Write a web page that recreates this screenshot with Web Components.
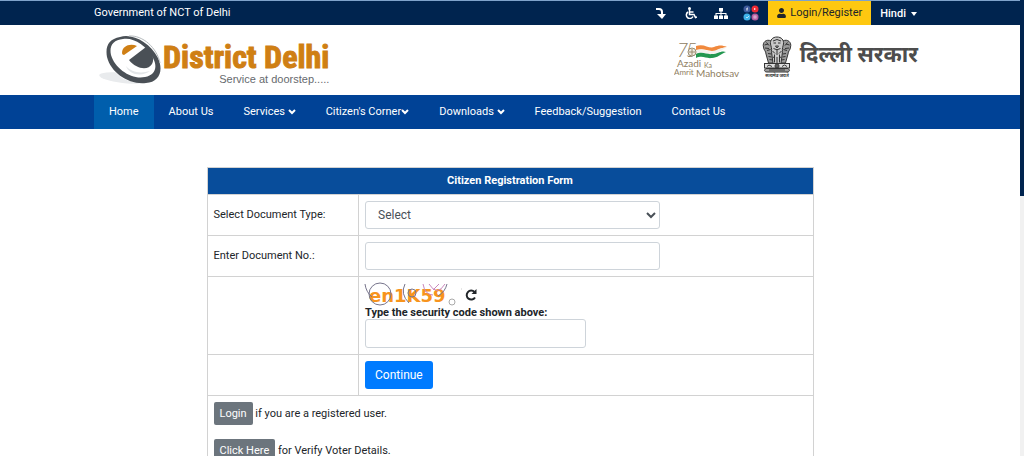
<!DOCTYPE html>
<html lang="en">
<head>
<meta charset="UTF-8">
<meta name="viewport" content="width=device-width, initial-scale=1">
<title>e-District Delhi - Citizen Registration Form</title>
<style>
  html, body {
    margin: 0;
    height: 100%;
  }
  body {
    display: flex;
    overflow: hidden;
    background: #fff;
    color: #212529;
    font-family: Roboto, "Noto Sans", sans-serif;
    font-size: 11px;
    line-height: 16px;
  }
  .page {
    flex: 1;
    min-width: 0;
  }
</style>
</head>
<body>
<div class="page">
  <top-bar></top-bar>
  <site-header></site-header>
  <main-nav>
    <nav-item active>Home</nav-item>
    <nav-item>About Us</nav-item>
    <nav-item menu>Services&nbsp;</nav-item>
    <nav-item menu>Citizen's Corner</nav-item>
    <nav-item menu>Downloads&nbsp;</nav-item>
    <nav-item>Feedback/Suggestion</nav-item>
    <nav-item>Contact Us</nav-item>
  </main-nav>
  <registration-form></registration-form>
</div>
<scroll-rail></scroll-rail>

<script>
// TOP BAR
class TopBar extends HTMLElement {
  constructor() {
    super();
    this.attachShadow({ mode: "open" });
    this.shadowRoot.innerHTML = `
      <style>
        :host {
          display: block;
          background: #00244f;
          border-top: 1px solid #7fa3cb;
          color: #fff;
          padding: 0 94px;
        }
        .bar {
          display: flex;
          align-items: center;
          justify-content: space-between;
          height: 24px;
        }
        .tools {
          display: flex;
          align-items: center;
          height: 100%;
        }
        a {
          color: inherit;
          text-decoration: none;
        }
        .icon {
          display: flex;
          justify-content: center;
          width: 30px;
        }
        .icon svg, .login svg {
          display: block;
        }
        .login {
          display: flex;
          align-items: center;
          gap: 4px;
          height: 100%;
          padding: 0 9px;
          margin-left: 2px;
          background: #fec810;
          color: #212529;
        }
        .lang {
          display: flex;
          align-items: center;
          gap: 5px;
          margin-left: 9px;
          padding: 2px 9px 0 0;
          border: 0;
          background: none;
          color: inherit;
          font: 500 11px/16px Roboto, sans-serif;
        }
        .caret {
          border: 3px solid transparent;
          border-top: 4px solid #fff;
          border-bottom: 0;
        }
      </style>
      <div class="bar">
        <span>Government of NCT of Delhi</span>
        <div class="tools">
          <a class="icon" href="#main" aria-label="Skip to main content">
            <svg width="10" height="12" viewBox="0 0 10 12" fill="none" stroke="#fff" stroke-width="2">
              <path d="M0 2h3q3 0 3 3v3"/><path d="M1 7h9L6 12z" fill="#fff" stroke="none"/>
            </svg>
          </a>
          <a class="icon" href="#access" aria-label="Accessibility">
            <svg width="12" height="12" viewBox="0 0 24 24" fill="none" stroke="#fff" stroke-width="3">
              <circle cx="9" cy="3" r="3" fill="#fff" stroke="none"/>
              <path d="M9 5v10h9l3 6 3-1M9 10h8M6 10a7 7 0 1 0 10 9"/>
            </svg>
          </a>
          <a class="icon" href="#sitemap" aria-label="Sitemap">
            <svg width="14" height="11" viewBox="0 0 28 22" fill="#fff">
              <path d="M10 0h8v7h-3v3h10v5h3v7h-8v-7h3v-3h-8v3h3v7h-8v-7h3v-3H5v3h3v7H0v-7h3v-5h10V7h-3z"/>
            </svg>
          </a>
          <a class="icon" href="#social" aria-label="Social media">
            <svg width="16" height="16" viewBox="0 0 16 16">
              <circle cx="4" cy="4" r="3.500" fill="#3d5a9b"/><circle cx="12" cy="4" r="3.500" fill="#ee2b34"/>
              <circle cx="4" cy="12" r="3.500" fill="#3fb2e8"/><circle cx="12" cy="12" r="3.500" fill="#b45a9c"/>
              <path d="M4 6V3h1M3 4h2M3 12l1 1 2-2" stroke="#fff" stroke-width="1" fill="none" opacity=".6"/>
              <path d="M11 3v2l2-1z" fill="#fff"/><rect x="11" y="11" width="2" height="2" fill="none" stroke="#fff" opacity=".6"/>
            </svg>
          </a>
          <a class="login" href="#login">
            <svg width="9" height="10" viewBox="0 0 448 512" fill="#212529">
              <path d="M224 256c71 0 128-57 128-128S295 0 224 0 96 57 96 128s57 128 128 128zm90 32h-17c-22 10-47 16-73 16s-51-6-73-16h-17C60 288 0 348 0 422v42c0 27 21 48 48 48h352c27 0 48-21 48-48v-42c0-74-60-134-134-134z"/>
            </svg>
            Login/Register
          </a>
          <button class="lang" type="button">Hindi <span class="caret"></span></button>
        </div>
      </div>
    `;
  }
}
customElements.define("top-bar", TopBar);

// HEADER WITH LOGOS
class SiteHeader extends HTMLElement {
  constructor() {
    super();
    this.attachShadow({ mode: "open" });
    this.shadowRoot.innerHTML = `
      <style>
        :host {
          display: flex;
          justify-content: space-between;
          align-items: center;
          height: 70px;
          padding: 0 102px 0 98px;
          background: #fff;
        }
        .brand, .partners {
          display: flex;
          align-items: center;
        }
        .brand {
          color: #cf7f14;
          text-decoration: none;
        }
        svg {
          display: block;
        }
        .name {
          display: block;
          font: bold 32px/32px Impact, "Liberation Sans Narrow", "Roboto Condensed", "Open Sans Condensed", "Liberation Sans", sans-serif;
          -webkit-text-stroke: 1px #cf7f14;
        }
        .tagline {
          display: block;
          color: #666a6e;
          font: 11px/12px "Liberation Sans", sans-serif;
          text-align: right;
        }
        .words {
          padding-top: 6px;
        }
        .partners {
          align-items: flex-start;
          padding-bottom: 4px;
        }
        .azadi {
          padding-top: 3px;
        }
        .emblem {
          margin: 0 8px 0 22px;
        }
        .gov {
          color: #4d4d4d;
          font: bold 22px/42px "Noto Sans Devanagari", "Noto Sans", sans-serif;
        }
      </style>
      <a class="brand" href="#home">
        <svg width="65" height="54" viewBox="0 0 65 54">
          <ellipse cx="25" cy="45" rx="24" ry="5" fill="#e9ebed" transform="rotate(7 25 45)"/>
          <ellipse cx="35" cy="27" rx="23" ry="21" fill="#fff" transform="rotate(35 35 27)"/>
          <path fill-rule="evenodd" fill="#4a5056" d="M22 4C35 0 52 10 60 25c6 13 1 24-12 25C31 52 13 40 9 24 7 13 11 6 22 4zM25 6c-10 1-14 7-12 16 4 14 21 25 34 22 10-2 13-10 8-19C48 12 35 4 25 6z"/>
          <path d="M31 3c14-1 28 12 31 27" fill="none" stroke="#b5babd" stroke-width="1"/>
          <path d="M24 20c0-7 8-10 15-7l-13 9c-1 0-2-1-2-2z" fill="#cf7f14"/>
          <path d="M48 14c6 5 9 12 6 17-4 7-16 5-23-4z" fill="#4a5056"/>
          <path d="M28 33c5 6 14 8 24 5-8 6-21 4-24-5z" fill="#e3e6e8"/>
        </svg>
        <span class="words">
          <span class="name">District Delhi</span>
          <span class="tagline">Service at doorstep.....</span>
        </span>
      </a>
      <div class="partners">
        <svg class="azadi" width="66" height="42" viewBox="0 0 66 42" font-family="Lato, sans-serif" fill="#8f8062">
          <g font-size="19" font-weight="300"><text x="3" y="18" font-style="italic">7</text><text x="12" y="18" font-style="italic">5</text></g>
          <path d="M22 7c8-3 13 3 18 1 5-2 8-2 13 0-6 0-9 5-15 4-6-1-9-3-16-1z" fill="#f1893d"/>
          <path d="M22 11c7-2 11 2 16 1 5 0 8-4 14-3-5 2-8 6-14 6-6 0-9-3-16 0z" fill="#f2f2ee"/>
          <path d="M22 15c7-3 11 1 16 0 6 0 9-4 14-2-5 2-9 6-14 6-6 1-9-3-16 0z" fill="#239750"/>
          <circle cx="18" cy="13" r="4" fill="#eee9df" stroke="#9a8c70"/>
          <path d="M18 10v6M15 13h6" stroke="#9a8c70"/>
          <text x="3" y="28" font-size="10">Azadi</text>
          <text x="30" y="29" font-size="7">Ka</text>
          <text x="0" y="36" font-size="8">Amrit</text>
          <text x="22" y="38" font-size="10">Mahotsav</text>
        </svg>
        <svg class="emblem" width="30" height="42" viewBox="0 0 60 84">
          <g fill="#9a9a9a" stroke="#343434" stroke-width="2">
            <path d="M18 10c-9-5-18 3-15 12 0 6 5 8 5 14l5 18h34l5-18c0-6 5-8 5-14 3-9-6-17-15-12z"/>
            <path d="M30 2c-9 0-14 6-13 14 1 5 3 9 2 15l3 24h16l3-24c-1-6 1-10 2-15C44 8 39 2 30 2z" fill="#c9c9c9"/>
            <rect x="5" y="55" width="50" height="9" fill="#ddd"/>
            <path d="M8 65h44c5 3 3 7-2 7H10c-5 0-7-4-2-7z"/>
          </g>
          <g fill="none" stroke="#343434" stroke-width="2">
            <path d="M22 10q8-6 16 0M23 14h5M32 14h5M27 20h6l-3 4zM23 25q7 5 14 0M21 30l5 5M39 30l-5 5M30 28v10M25 37v16M35 37v16M22 42l4 2M38 42l-4 2M30 42v12"/>
            <path d="M5 18l7-2M6 24l8 1M10 29l7-2M12 35l7 1M13 41l6 1M15 47l6 1M55 18l-7-2M54 24l-8 1M50 29l-7-2M48 35l-7 1M47 41l-6 1M45 47l-6 1M9 13l5 6M51 13l-5 6"/>
            <circle cx="30" cy="60" r="4"/><path d="M26 60h8M30 56v8M10 61l4-3 6 3M40 61l5-3 5 3M14 68h32"/>
          </g>
          <text x="30" y="81" text-anchor="middle" font-size="9" font-weight="bold" fill="#343434" font-family="Noto Sans Devanagari, Noto Sans, sans-serif">सत्यमेव जयते</text>
        </svg>
        <span class="gov" lang="hi">दिल्ली सरकार</span>
      </div>
    `;
  }
}
customElements.define("site-header", SiteHeader);

// NAVIGATION
class MainNav extends HTMLElement {
  constructor() {
    super();
    this.attachShadow({ mode: "open" });
    this.shadowRoot.innerHTML = `
      <style>
        :host {
          display: block;
          background: #004296;
        }
        nav {
          display: flex;
          padding: 0 94px;
        }
      </style>
      <nav><slot></slot></nav>
    `;
  }
}
customElements.define("main-nav", MainNav);

class NavItem extends HTMLElement {
  constructor() {
    super();
    this.attachShadow({ mode: "open" });
    this.shadowRoot.innerHTML = `
      <style>
        :host {
          display: block;
        }
        a {
          display: flex;
          align-items: center;
          padding: 9px 15px;
          color: #fff;
          text-decoration: none;
          white-space: nowrap;
        }
        :host([active]) a {
          background: #005eac;
        }
        svg {
          display: none;
        }
        :host([menu]) svg {
          display: block;
        }
      </style>
      <a href="#"><slot></slot>
        <svg width="8" height="6" viewBox="0 0 8 6" fill="none" stroke="#fff" stroke-width="2"><path d="M1 1l3 3 3-3"/></svg>
      </a>
    `;
  }
}
customElements.define("nav-item", NavItem);

// CAPTCHA
class CaptchaCode extends HTMLElement {
  constructor() {
    super();
    this.attachShadow({ mode: "open" });
    this.shadowRoot.innerHTML = `
      <style>
        :host {
          display: flex;
          align-items: center;
        }
        svg {
          overflow: visible;
        }
        button {
          display: flex;
          padding: 0;
          border: 0;
          background: none;
        }
      </style>
      <svg width="100" height="23" viewBox="0 0 100 23" fill="none">
        <text x="4" y="19" fill="#f7941d" font-family="DejaVu Sans, sans-serif" font-size="18" font-weight="bold">en1K59</text>
        <g stroke="#77758c">
          <circle cx="15" cy="11" r="11"/><path d="M0 1q1 8 7 13M40 1q-5 10 4 19M82 1q-2 8-9 12"/>
          <circle cx="47" cy="10" r="4"/><circle cx="87" cy="19" r="3" stroke="#aaa"/>
        </g>
        <path d="M58 1q2 11 10 11M64 1q8 13 16 0M68 7l6-6" stroke="#c988bd"/>
        <path d="M96 6h1" stroke="#ccc"/>
      </svg>
      <button type="button" aria-label="Refresh code">
        <svg width="12" height="12" viewBox="0 0 12 12" fill="none" stroke="#212529" stroke-width="2">
          <path d="M10 8.500A4.500 4.500 0 1 1 9.500 3"/><path d="M11.500 0v5h-5z" fill="#212529" stroke="none"/>
        </svg>
      </button>
    `;
  }
}
customElements.define("captcha-code", CaptchaCode);

// REGISTRATION FORM
class RegistrationForm extends HTMLElement {
  constructor() {
    super();
    this.attachShadow({ mode: "open" });
    this.shadowRoot.innerHTML = `
      <style>
        :host {
          display: block;
          padding: 38px 16px 0;
        }
        form {
          max-width: 607px;
          margin: 0 auto;
        }
        table {
          width: 100%;
          border-collapse: collapse;
          table-layout: fixed;
        }
        .label-col {
          width: 25%;
        }
        th {
          padding: 5px;
          background: #084d9b;
          color: #fff;
          font-weight: bold;
        }
        th, td {
          border: 1px solid #d2d2d2;
        }
        td {
          padding: 6px;
        }
        select, input {
          display: block;
          box-sizing: border-box;
          width: 295px;
          max-width: 100%;
          height: 28px;
          border: 1px solid #ced4da;
          border-radius: 3px;
          background: #fff;
          color: #495057;
          font: 12px/18px Roboto, sans-serif;
        }
        select {
          padding: 0 0 0 8px;
        }
        input {
          padding: 0 8px;
        }
        #code {
          width: 221px;
          height: 29px;
        }
        .code-label {
          display: block;
          font-weight: bold;
          line-height: 13px;
        }
        .continue {
          display: block;
          height: 28px;
          padding: 0 10px;
          border: 0;
          border-radius: 3px;
          background: #007bff;
          color: #fff;
          font: 12px/18px Roboto, sans-serif;
        }
        .line {
          margin: 0 0 14px;
        }
        .small {
          display: inline-block;
          height: 23px;
          padding: 0 6px;
          border: 0;
          border-radius: 2px;
          background: #6c757d;
          color: #fff;
          font: 11px/16px Roboto, sans-serif;
        }
      </style>
      <form>
        <table>
          <colgroup><col class="label-col"><col></colgroup>
          <tr><th colspan="2">Citizen Registration Form</th></tr>
          <tr>
            <td><label for="docType">Select Document Type:</label></td>
            <td><select id="docType"><option>Select</option></select></td>
          </tr>
          <tr>
            <td><label for="docNo">Enter Document No.:</label></td>
            <td><input type="text" id="docNo"></td>
          </tr>
          <tr>
            <td></td>
            <td>
              <captcha-code></captcha-code>
              <label class="code-label" for="code">Type the security code shown above:</label>
              <input type="text" id="code">
            </td>
          </tr>
          <tr>
            <td></td>
            <td><button class="continue" type="submit">Continue</button></td>
          </tr>
          <tr>
            <td colspan="2">
              <p class="line"><button class="small" type="button">Login</button> if you are a registered user.</p>
              <p class="line"><button class="small" type="button">Click Here</button> for Verify Voter Details.</p>
            </td>
          </tr>
        </table>
      </form>
    `;
  }
  connectedCallback() {
    this.shadowRoot
      .querySelector("form")
      .addEventListener("submit", (e) => e.preventDefault());
  }
}
customElements.define("registration-form", RegistrationForm);

// SCROLL RAIL
class ScrollRail extends HTMLElement {
  constructor() {
    super();
    this.attachShadow({ mode: "open" });
    this.shadowRoot.innerHTML = `
      <style>
        :host {
          display: block;
          width: 4px;
          background: #f1f1f1;
        }
        .thumb {
          height: 43%;
          background: #00244f;
        }
      </style>
      <div class="thumb"></div>
    `;
  }
}
customElements.define("scroll-rail", ScrollRail);
</script>
</body>
</html>
